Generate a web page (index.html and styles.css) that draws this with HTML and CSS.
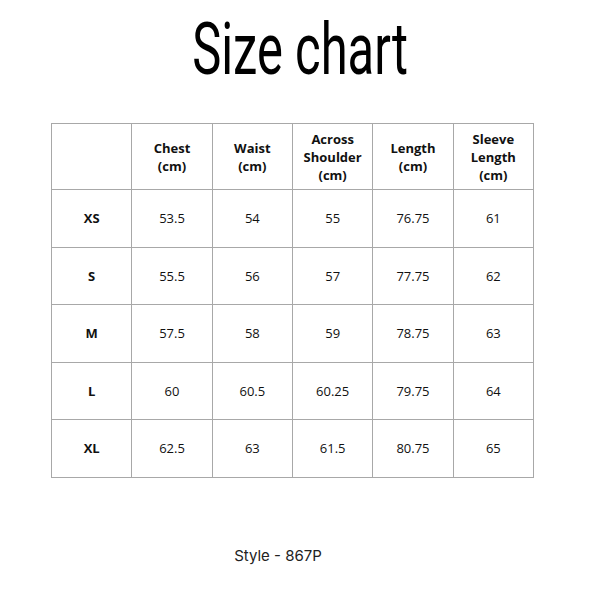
FILE: index.html
```html
<!DOCTYPE html>
<html>
<head>
<meta charset="utf-8">
<link rel="stylesheet" href="styles.css">
</head>
<body>
<div class="page">
  <h1 class="title"><span class="title-text">Size chart</span></h1>
  <table class="chart">
    <thead>
      <tr>
        <th></th>
        <th>Chest<br>(cm)</th>
        <th>Waist<br>(cm)</th>
        <th>Across<br>Shoulder<br>(cm)</th>
        <th>Length<br>(cm)</th>
        <th>Sleeve<br>Length<br>(cm)</th>
      </tr>
    </thead>
    <tbody>
      <tr><th>XS</th><td>53.5</td><td>54</td><td>55</td><td>76.75</td><td>61</td></tr>
      <tr><th>S</th><td>55.5</td><td>56</td><td>57</td><td>77.75</td><td>62</td></tr>
      <tr><th>M</th><td>57.5</td><td>58</td><td>59</td><td>78.75</td><td>63</td></tr>
      <tr><th>L</th><td>60</td><td>60.5</td><td>60.25</td><td>79.75</td><td>64</td></tr>
      <tr><th>XL</th><td>62.5</td><td>63</td><td>61.5</td><td>80.75</td><td>65</td></tr>
    </tbody>
  </table>
  <p class="style">Style - 867P</p>
</div>
</body>
</html>
```
FILE: styles.css
```css
html, body {
  margin: 0;
  padding: 0;
  background: #ffffff;
}
.page {
  width: 600px;
  height: 600px;
  display: flex;
  flex-direction: column;
}
.title {
  margin: 0;
  height: 123px;
  display: flex;
  justify-content: center;
  align-items: flex-start;
  font-family: Roboto, sans-serif;
  font-weight: 400;
  font-size: 73px;
  line-height: 1;
  color: #000;
}
.title-text {
  display: inline-block;
  margin-top: 13px;
  transform: scaleX(0.67);
  letter-spacing: 0;
}
.chart {
  margin-left: 51px;
  border-collapse: collapse;
  table-layout: fixed;
  width: 483px;
  font-family: "Open Sans", sans-serif;
  font-size: 13px;
  color: #111;
}
.chart th, .chart td {
  border: 1px solid #a8a8a8;
  text-align: center;
  vertical-align: middle;
  padding: 0;
}
.chart thead th {
  height: 65px;
  font-weight: 700;
  line-height: 18px;
}
.chart tbody th {
  font-weight: 700;
}
.chart tbody td, .chart tbody th {
  height: 56.5px;
}
.style {
  margin: 68px 0 0 0;
  padding-right: 44px;
  text-align: center;
  font-family: Inter, sans-serif;
  font-size: 15px;
  color: #222;
}
```
